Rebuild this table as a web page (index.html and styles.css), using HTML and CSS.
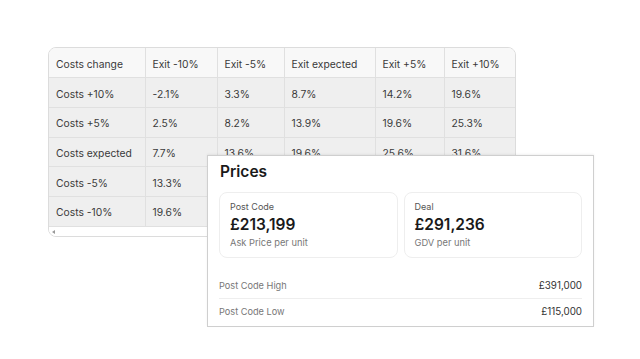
FILE: index.html
```html
<!DOCTYPE html>
<html>
<head>
<meta charset="utf-8">
<link rel="stylesheet" href="styles.css">
</head>
<body>
<div class="stage">
  <div class="table-card">
    <table class="grid">
      <thead>
        <tr><th class="c1">Costs change</th><th class="c2">Exit -10%</th><th class="c3">Exit -5%</th><th class="c4">Exit expected</th><th class="c5">Exit +5%</th><th class="c6">Exit +10%</th></tr>
      </thead>
      <tbody>
        <tr><td>Costs +10%</td><td>-2.1%</td><td>3.3%</td><td>8.7%</td><td>14.2%</td><td>19.6%</td></tr>
        <tr><td>Costs +5%</td><td>2.5%</td><td>8.2%</td><td>13.9%</td><td>19.6%</td><td>25.3%</td></tr>
        <tr><td>Costs expected</td><td>7.7%</td><td>13.6%</td><td>19.6%</td><td>25.6%</td><td>31.6%</td></tr>
        <tr><td>Costs -5%</td><td>13.3%</td><td>19.6%</td><td>25.9%</td><td>32.2%</td><td>38.5%</td></tr>
        <tr><td>Costs -10%</td><td>19.6%</td><td>26.0%</td><td>32.5%</td><td>38.9%</td><td>45.4%</td></tr>
      </tbody>
    </table>
    <div class="scrollbar"><span class="arrow"></span></div>
  </div>

  <div class="prices">
    <h2 class="title">Prices</h2>
    <div class="cards">
      <div class="card">
        <div class="label">Post Code</div>
        <div class="value">£213,199</div>
        <div class="sub">Ask Price per unit</div>
      </div>
      <div class="card">
        <div class="label">Deal</div>
        <div class="value">£291,236</div>
        <div class="sub">GDV per unit</div>
      </div>
    </div>
    <div class="rows">
      <div class="row"><span class="k">Post Code High</span><span class="v">£391,000</span></div>
      <div class="row"><span class="k">Post Code Low</span><span class="v">£115,000</span></div>
    </div>
  </div>
</div>
</body>
</html>
```

FILE: styles.css
```css
* { box-sizing: border-box; }
html, body { margin: 0; padding: 0; background: #fff; }
body {
  font-family: Inter, "Noto Sans", sans-serif;
  color: #333;
  width: 640px;
  height: 359px;
  overflow: hidden;
}
.stage {
  position: relative;
  padding: 47px 0 0 48px;
}
.table-card {
  width: 468px;
  border: 1px solid #dcdcdc;
  border-radius: 8px;
  overflow: hidden;
  background: #fff;
}
.grid {
  border-collapse: collapse;
  table-layout: fixed;
  width: 467px;
  font-size: 10.3px;
}
.grid th, .grid td {
  text-align: left;
  font-weight: 400;
  height: 29.7px;
  padding: 2px 0 0 7px;
  border-right: 1px solid #e0e0e0;
  border-bottom: 1px solid #e0e0e0;
  white-space: nowrap;
  color: #3a3a3a;
}
.grid th:last-child, .grid td:last-child { border-right: none; }
.grid thead th { background: #f8f8f8; }
.grid tbody td { background: #efefef; }
.c1 { width: 96px; }
.c2 { width: 72px; }
.c3 { width: 67px; }
.c4 { width: 91px; }
.c5 { width: 69px; }
.c6 { width: 72px; }
.scrollbar {
  height: 9px;
  position: relative;
  background: #fff;
}
.arrow {
  position: absolute;
  left: 3px;
  top: 3px;
  width: 0; height: 0;
  border-top: 2px solid transparent;
  border-bottom: 2px solid transparent;
  border-right: 3px solid #999;
}
.prices {
  position: absolute;
  left: 207px;
  top: 155px;
  width: 387px;
  height: 172px;
  background: #fff;
  border: 1px solid #cfcfcf;
  box-shadow: 0 -1px 2px rgba(0,0,0,0.06);
  padding: 6px 11px 0 11px;
}
.title {
  margin: 0 0 0 1px;
  font-size: 15.5px;
  font-weight: 600;
  line-height: 20px;
  color: #1a1a1a;
}
.cards {
  display: flex;
  gap: 6px;
  margin-top: 10px;
}
.card {
  flex: 1;
  height: 66px;
  border: 1px solid #eeeeee;
  border-radius: 8px;
  padding: 7px 10px 0;
}
.label {
  font-size: 9px;
  color: #555;
  line-height: 14px;
}
.value {
  font-size: 15.5px;
  font-weight: 600;
  color: #1a1a1a;
  line-height: 22px;
}
.sub {
  font-size: 9.3px;
  color: #777;
  line-height: 14px;
}
.rows {
  margin-top: 15px;
}
.row {
  display: flex;
  justify-content: space-between;
  align-items: center;
  height: 25px;
}
.row + .row { border-top: 1px solid #eeeeee; }
.k { color: #777; font-size: 9.2px; }
.v { color: #333; font-size: 9.8px; }
```
